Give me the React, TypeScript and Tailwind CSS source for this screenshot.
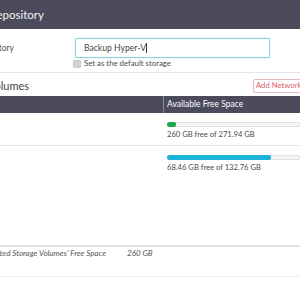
import React from "react";

const volumes = [
  { free: "260 GB", total: "271.94 GB", pct: 7, color: "bg-[#1fa64a]" },
  { free: "68.46 GB", total: "132.76 GB", pct: 78, color: "bg-[#1bb3d8]" },
];

export default function App() {
  return (
    <div className="w-[300px] h-[300px] overflow-hidden bg-white text-[#555] font-['Lato','Liberation_Sans',sans-serif]">
      <div className="h-[29px] bg-[#4b4b5c] flex items-center">
        <div className="w-[44px] flex justify-end whitespace-nowrap text-[11.5px] text-[#f2f2f2]">
          Edit Repository
        </div>
      </div>

      <div className="flex items-start pt-[9px]">
        <div className="w-[14px] h-[20px] flex items-center justify-end whitespace-nowrap text-[8.5px]">
          Name of the Repository
        </div>
        <div className="ml-[61px] flex flex-col">
          <div className="w-[195px] h-[20px] border border-[#8ed3df] rounded-[2px] flex items-center pl-[8px] text-[8.6px] text-[#444] shadow-[0_0_2px_rgba(102,175,233,0.4)]">
            Backup Hyper-V<span className="w-px h-[10px] bg-[#333]" />
          </div>
          <label className="flex items-center gap-[3px] mt-[1px] -ml-[2px] h-[9px] leading-[9px] text-[7.8px] text-[#4a4a4a]">
            <span className="w-[8px] h-[8px] rounded-[1px] bg-[#d4d4d4] border border-[#c8c8c8]" />
            Set as the default storage
          </label>
        </div>
      </div>

      <div className="mt-[4px] border-t border-[#e6e6e6]" />

      <div className="flex items-start h-[23px]">
        <div className="w-[29px] mt-[6px] leading-[14px] flex justify-end whitespace-nowrap text-[11px] text-[#444]">
          Storage Volumes
        </div>
        <div className="shrink-0 ml-[224px] mt-[6px] h-[14px] border border-[#e9b8b8] rounded-[2px] pl-[2px] pr-[3px] flex items-center text-[7.7px] text-[#d9646a] whitespace-nowrap">
          Add Network Storage
        </div>
      </div>

      <div className="h-[17px] bg-[#4b4b5c] flex">
        <div className="w-[164px] border-r border-[#8a8a98]" />
        <div className="flex items-center pl-[3px] text-[8.5px] text-white">Available Free Space</div>
      </div>

      {volumes.map((v, i) => (
        <div key={i} className={`flex ${i === 0 ? "h-[33px] border-b border-[#e8e8e8]" : "h-[32px]"}`}>
          <div className="w-[167px]" />
          <div className="flex-1 pt-[9px]">
            <div className="h-[5px] bg-[#f5f5f5] shadow-[inset_0_0_0_1px_#e0e0e0] rounded-[2px] overflow-hidden">
              <div className={`h-full rounded-[2px] ${v.color}`} style={{ width: `${v.pct}%` }} />
            </div>
            <div className="mt-[3px] leading-[8px] text-[7.6px] text-[#4a4a4a] whitespace-nowrap">
              {v.free} free of {v.total}
            </div>
          </div>
        </div>
      ))}

      <div className="mt-[67px] border-t-2 border-[#e2e2e2] h-[32px] border-b border-b-[#ececec] flex items-start leading-[10px] pt-[1px] text-[8px] italic text-[#555]">
        <div className="w-[106px] flex justify-end whitespace-nowrap">
          Total of Supported Storage Volumes' Free Space
        </div>
        <div className="ml-[21px]">260 GB</div>
      </div>
    </div>
  );
}
